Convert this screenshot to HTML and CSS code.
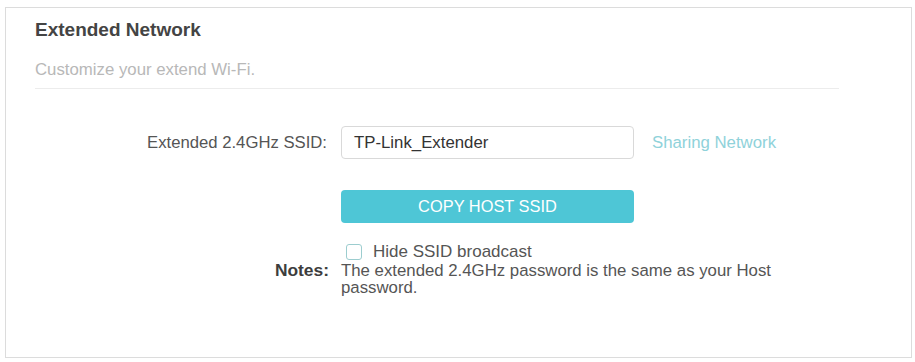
FILE: index.html
```html
<!DOCTYPE html>
<html>
<head>
<meta charset="utf-8">
<link rel="stylesheet" href="styles.css">
</head>
<body>
<div class="card">
  <div class="header">
    <div class="title">Extended Network</div>
    <div class="subtitle">Customize your extend Wi-Fi.</div>
  </div>
  <div class="form">
    <div class="label">Extended 2.4GHz SSID:</div>
    <div class="field">
      <div class="input">TP-Link_Extender</div>
      <a class="link">Sharing Network</a>
    </div>
    <div class="spacer"></div>
    <div class="field btn-row">
      <div class="button">COPY HOST SSID</div>
    </div>
    <div class="spacer"></div>
    <div class="field check-row">
      <span class="checkbox"></span>
      <span class="check-label">Hide SSID broadcast</span>
    </div>
    <div class="label notes-label">Notes:</div>
    <div class="notes-text">The extended 2.4GHz password is the same as your Host password.</div>
  </div>
</div>
</body>
</html>
```
FILE: styles.css
```css
html, body {
  margin: 0;
  padding: 0;
  background: #ffffff;
}
body {
  font-family: "Liberation Sans", Arial, sans-serif;
  padding: 7px 3px 4px 5px;
}
.card {
  box-sizing: border-box;
  height: 351px;
  border: 1px solid #dcdcdc;
  padding: 11px 30px 0 29px;
}
.header {
  margin-right: 42px;
  border-bottom: 1px solid #ececec;
  padding-bottom: 9px;
}
.title {
  font-size: 19px;
  line-height: 22px;
  font-weight: bold;
  color: #444;
}
.subtitle {
  margin-top: 20px;
  font-size: 16.8px;
  line-height: 18px;
  color: #b8b8b8;
}
.form {
  display: grid;
  grid-template-columns: 292px 1fr;
  column-gap: 14px;
  margin-top: 37px;
  align-items: center;
}
.label {
  text-align: right;
  font-size: 16.7px;
  color: #555;
}
.field {
  display: flex;
  align-items: center;
}
.input {
  box-sizing: border-box;
  width: 293px;
  height: 33px;
  border: 1px solid #d9d9d9;
  border-radius: 4px;
  padding: 0 12px;
  font-size: 16.8px;
  line-height: 31px;
  color: #333;
}
.link {
  margin-left: 18px;
  font-size: 16.8px;
  color: #8fd2da;
}
.spacer {
  height: 0;
}
.btn-row {
  margin-top: 31px;
}
.button {
  width: 293px;
  height: 33px;
  border-radius: 4px;
  background: #4ec6d6;
  color: #ffffff;
  font-size: 16.4px;
  line-height: 33px;
  text-align: center;
}
.check-row {
  margin-top: 19px;
  padding-left: 5px;
}
.checkbox {
  box-sizing: border-box;
  width: 16px;
  height: 16px;
  border: 1.5px solid #9ccdcf;
  border-radius: 3px;
  margin-right: 11px;
}
.check-label {
  font-size: 17px;
  line-height: 20px;
  color: #555;
}
.notes-label {
  align-self: start;
  font-weight: bold;
  color: #3d3d3d;
  margin-right: -2px;
  font-size: 17.4px;
  line-height: 17px;
}
.notes-text {
  max-width: 460px;
  font-size: 16.8px;
  line-height: 17px;
  color: #555;
}
```
